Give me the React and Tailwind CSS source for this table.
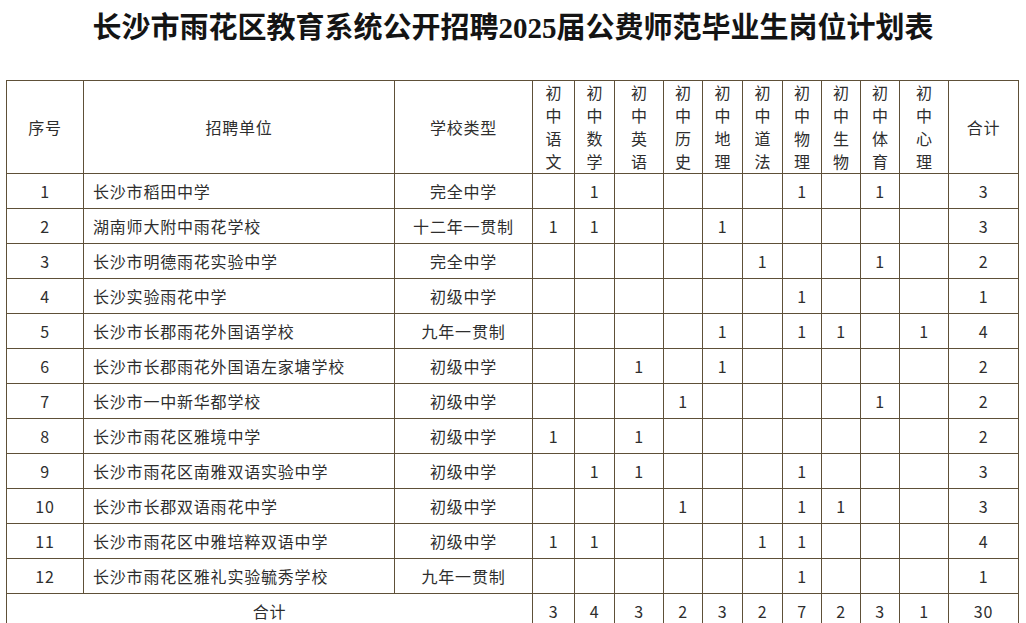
import React from "react";

const subjects = ["语文", "数学", "英语", "历史", "地理", "道法", "物理", "生物", "体育", "心理"];
const widths = ["w-[77px]", "w-[311px]", "w-[138px]", "w-[42px]", "w-[40px]", "w-[49px]", "w-[39px]", "w-[40px]", "w-[40px]", "w-[39px]", "w-[39px]", "w-[39px]", "w-[49px]", "w-[70px]"];

const rows = [
  ["长沙市稻田中学", "完全中学", [0, 1, 0, 0, 0, 0, 1, 0, 1, 0], 3],
  ["湖南师大附中雨花学校", "十二年一贯制", [1, 1, 0, 0, 1, 0, 0, 0, 0, 0], 3],
  ["长沙市明德雨花实验中学", "完全中学", [0, 0, 0, 0, 0, 1, 0, 0, 1, 0], 2],
  ["长沙实验雨花中学", "初级中学", [0, 0, 0, 0, 0, 0, 1, 0, 0, 0], 1],
  ["长沙市长郡雨花外国语学校", "九年一贯制", [0, 0, 0, 0, 1, 0, 1, 1, 0, 1], 4],
  ["长沙市长郡雨花外国语左家塘学校", "初级中学", [0, 0, 1, 0, 1, 0, 0, 0, 0, 0], 2],
  ["长沙市一中新华都学校", "初级中学", [0, 0, 0, 1, 0, 0, 0, 0, 1, 0], 2],
  ["长沙市雨花区雅境中学", "初级中学", [1, 0, 1, 0, 0, 0, 0, 0, 0, 0], 2],
  ["长沙市雨花区南雅双语实验中学", "初级中学", [0, 1, 1, 0, 0, 0, 1, 0, 0, 0], 3],
  ["长沙市长郡双语雨花中学", "初级中学", [0, 0, 0, 1, 0, 0, 1, 1, 0, 0], 3],
  ["长沙市雨花区中雅培粹双语中学", "初级中学", [1, 1, 0, 0, 0, 1, 1, 0, 0, 0], 4],
  ["长沙市雨花区雅礼实验毓秀学校", "九年一贯制", [0, 0, 0, 0, 0, 0, 1, 0, 0, 0], 1],
];

const totals = [3, 4, 3, 2, 3, 2, 7, 2, 3, 1];

const cell = "border border-[#5e5038] text-center align-middle p-0";

export default function App() {
  return (
    <div
      className="w-[1026px] h-[623px] overflow-hidden bg-white text-[#2e2e2e]"
      style={{ fontFamily: '"Noto Sans CJK SC", "Noto Sans", sans-serif' }}
    >
      <h1
        className="text-center text-[29px] font-bold leading-[40px] pt-[8px] text-[#141414]"
        style={{ fontFamily: '"Liberation Serif", "Noto Sans CJK SC", serif' }}
      >
        长沙市雨花区教育系统公开招聘2025届公费师范毕业生岗位计划表
      </h1>
      <div className="pl-[6px] pt-[32px]">
        <table className="table-fixed border-collapse w-[1012px] text-[16px] tracking-[0.8px]">
          <colgroup>
            {widths.map((w, i) => (
              <col key={i} className={w} />
            ))}
          </colgroup>
          <thead>
            <tr className="h-[93px]">
              <th className={`${cell} font-normal`}>序号</th>
              <th className={`${cell} font-normal`}>招聘单位</th>
              <th className={`${cell} font-normal`}>学校类型</th>
              {subjects.map((s) => (
                <th key={s} className={`${cell} font-normal leading-[23px] tracking-normal`}>
                  <div className="flex flex-col items-center">
                    <span>初</span>
                    <span>中</span>
                    <span>{s[0]}</span>
                    <span>{s[1]}</span>
                  </div>
                </th>
              ))}
              <th className={`${cell} font-normal`}>合计</th>
            </tr>
          </thead>
          <tbody>
            {rows.map((r, i) => (
              <tr key={i} className="h-[35px]">
                <td className={cell}>{i + 1}</td>
                <td className={`${cell} text-left pl-[9px]`}>{r[0]}</td>
                <td className={cell}>{r[1]}</td>
                {r[2].map((v, j) => (
                  <td key={j} className={cell}>{v ? 1 : ""}</td>
                ))}
                <td className={cell}>{r[3]}</td>
              </tr>
            ))}
            <tr className="h-[35px]">
              <td className={cell} colSpan={3}>合计</td>
              {totals.map((t, j) => (
                <td key={j} className={cell}>{t}</td>
              ))}
              <td className={cell}>30</td>
            </tr>
          </tbody>
        </table>
      </div>
    </div>
  );
}
